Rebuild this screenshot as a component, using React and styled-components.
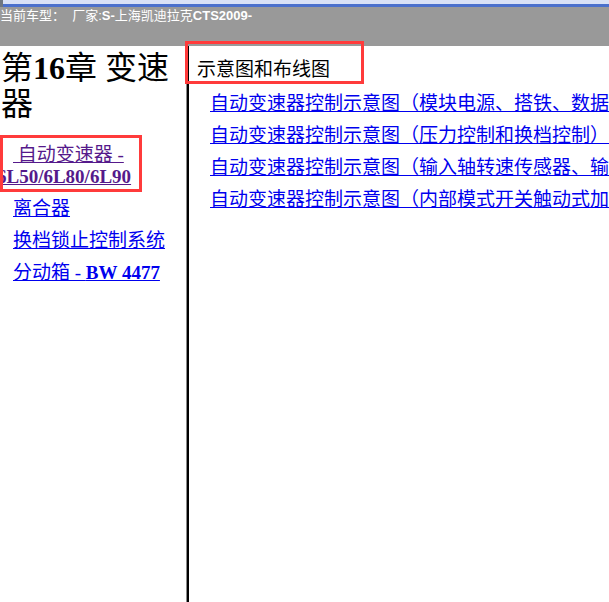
import React from "react";
import styled, { createGlobalStyle } from "styled-components";

const Global = createGlobalStyle`
  html, body { margin: 0; padding: 0; background: #fff; overflow: hidden; }
  body { width: 609px; height: 602px; }
`;

const Page = styled.div`
  position: relative;
  width: 609px;
  height: 602px;
  display: flex;
  flex-direction: column;
  overflow: hidden;
`;

const WindowEdge = styled.div`
  height: 4px;
  background: #d9e1f6;
  border-bottom: 3px solid #4b70cc;
  display: flex;
`;

const EdgeKnob = styled.div`
  width: 3px;
  height: 7px;
  background: #6f7680;
`;

const InfoBar = styled.div`
  height: 39px;
  background: #999999;
  color: #ffffff;
  font-family: "Liberation Sans", "Noto Sans CJK SC", sans-serif;
  font-size: 13px;
  line-height: 17px;
  white-space: nowrap;
`;

const Latin = styled.span`
  font-weight: ${(p) => (p.$bold ? "bold" : "normal")};
`;

const Body = styled.div`
  flex: 1;
  display: flex;
  min-height: 0;
`;

const Nav = styled.div`
  flex: none;
  width: 187px;
  box-sizing: border-box;
  border-right: 1px solid #8a8a8a;
  padding: 4px 0 0 1px;
`;

const ChapterTitle = styled.h1`
  margin: 0;
  font-family: "Liberation Serif", "Noto Sans CJK SC", serif;
  font-size: 32px;
  line-height: 36px;
  font-weight: normal;
  color: #000;
`;

const NavList = styled.div`
  margin-top: 22px;
  display: flex;
  flex-direction: column;
  gap: 10px;
`;

const NavLink = styled.a`
  display: block;
  margin-left: -4px;
  text-indent: 16px;
  font-family: "Liberation Serif", "Noto Sans CJK SC", serif;
  font-size: 19px;
  line-height: 22px;
  color: ${(p) => (p.$visited ? "#551a8b" : "#0000ee")};
  text-decoration: underline;
  cursor: pointer;
`;

const Content = styled.div`
  flex: 1;
  border-left: 2px solid #000;
  padding: 11px 0 0 8px;
  overflow: hidden;
`;

const SectionTitle = styled.div`
  font-family: "Noto Sans CJK SC", sans-serif;
  font-size: 19px;
  line-height: 22px;
  color: #000;
  white-space: nowrap;
`;

const DocList = styled.div`
  margin-top: 12px;
  padding-left: 13px;
  display: flex;
  flex-direction: column;
  gap: 10px;
`;

const DocLink = styled.a`
  display: block;
  font-family: "Noto Sans CJK SC", sans-serif;
  font-size: 19px;
  line-height: 22px;
  color: #0000ee;
  text-decoration: underline;
  white-space: nowrap;
  cursor: pointer;
`;

const Highlight = styled.div`
  position: absolute;
  left: ${(p) => p.$x}px;
  top: ${(p) => p.$y}px;
  width: ${(p) => p.$w}px;
  height: ${(p) => p.$h}px;
  box-sizing: border-box;
  border: 3px solid #ff3b3b;
  pointer-events: none;
`;

const docs = [
  "自动变速器控制示意图（模块电源、搭铁、数据通信）",
  "自动变速器控制示意图（压力控制和换档控制）",
  "自动变速器控制示意图（输入轴转速传感器、输出轴转速传感器）",
  "自动变速器控制示意图（内部模式开关触动式加减档开关）",
];

export default function App() {
  return (
    <>
      <Global />
      <Page>
        <WindowEdge>
          <EdgeKnob />
        </WindowEdge>
        <InfoBar>
          当前车型：&nbsp;&nbsp;厂家:<Latin $bold>S-</Latin>上海凯迪拉克<Latin $bold>CTS2009-</Latin>
        </InfoBar>
        <Body>
          <Nav>
            <ChapterTitle>
              第<Latin $bold>16</Latin>章 变速器
            </ChapterTitle>
            <NavList>
              <NavLink $visited>
                &nbsp;自动变速器 - <Latin $bold>6L50/6L80/6L90</Latin>
              </NavLink>
              <NavLink>离合器</NavLink>
              <NavLink>换档锁止控制系统</NavLink>
              <NavLink>
                分动箱 - <Latin $bold>BW 4477</Latin>
              </NavLink>
            </NavList>
          </Nav>
          <Content>
            <SectionTitle>示意图和布线图</SectionTitle>
            <DocList>
              {docs.map((d) => (
                <DocLink key={d}>{d}</DocLink>
              ))}
            </DocList>
          </Content>
        </Body>
        <Highlight $x={0} $y={135} $w={142} $h={57} />
        <Highlight $x={185} $y={41} $w={179} $h={43} />
      </Page>
    </>
  );
}
